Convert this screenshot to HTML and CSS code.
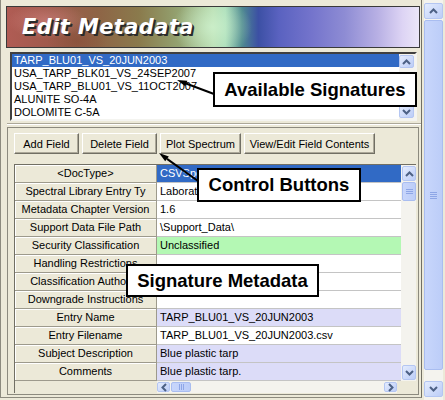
FILE: index.html
```html
<!DOCTYPE html>
<html>
<head>
<meta charset="utf-8">
<title>Edit Metadata</title>
<link rel="stylesheet" href="styles.css">
</head>
<body>
<div class="frame">
  <div class="content">
    <div class="banner"><span class="title">Edit Metadata</span></div>
    <div class="listbox">
      <ul class="items">
        <li class="sel">TARP_BLU01_VS_20JUN2003</li>
        <li>USA_TARP_BLK01_VS_24SEP2007</li>
        <li>USA_TARP_BLU01_VS_11OCT2007</li>
        <li>ALUNITE SO-4A</li>
        <li>DOLOMITE C-5A</li>
      </ul>
      <div class="lscroll">
        <span class="sbtn"><svg width="9" height="6" viewBox="0 0 9 6"><path d="M1 5 L4.5 1.5 L8 5" fill="none" stroke="#4d6185" stroke-width="2"/></svg></span>
        <span class="strack"></span>
        <span class="sbtn"><svg width="9" height="6" viewBox="0 0 9 6"><path d="M1 1 L4.5 4.5 L8 1" fill="none" stroke="#4d6185" stroke-width="2"/></svg></span>
      </div>
    </div>
    <div class="sep"></div>
    <div class="panel">
      <div class="buttons">
        <button class="btn w-add">Add Field</button>
        <button class="btn w-del">Delete Field</button>
        <button class="btn w-plot">Plot Spectrum</button>
        <button class="btn w-view">View/Edit Field Contents</button>
      </div>
      <div class="grid">
        <div class="lab">&lt;DocType&gt;</div><div class="val v-sel">CSVSpe</div>
        <div class="vscroll">
          <span class="sbtn gbtn"><svg width="9" height="6" viewBox="0 0 9 6"><path d="M1 5 L4.5 1.5 L8 5" fill="none" stroke="#4d6185" stroke-width="2"/></svg></span>
          <span class="gthumb"><i></i><i></i><i></i></span>
          <span class="strack"></span>
          <span class="sbtn gbtn"><svg width="9" height="6" viewBox="0 0 9 6"><path d="M1 1 L4.5 4.5 L8 1" fill="none" stroke="#4d6185" stroke-width="2"/></svg></span>
        </div>
        <div class="lab">Spectral Library Entry Ty</div><div class="val">Laborat</div>
        <div class="lab">Metadata Chapter Version</div><div class="val">1.6</div>
        <div class="lab">Support Data File Path</div><div class="val">\Support_Data\</div>
        <div class="lab">Security Classification</div><div class="val v-green">Unclassified</div>
        <div class="lab">Handling Restrictions</div><div class="val"></div>
        <div class="lab">Classification Authority</div><div class="val"></div>
        <div class="lab">Downgrade Instructions</div><div class="val"></div>
        <div class="lab">Entry Name</div><div class="val v-lav">TARP_BLU01_VS_20JUN2003</div>
        <div class="lab">Entry Filename</div><div class="val">TARP_BLU01_VS_20JUN2003.csv</div>
        <div class="lab">Subject Description</div><div class="val v-lav">Blue plastic tarp</div>
        <div class="lab">Comments</div><div class="val v-lav">Blue plastic tarp.</div>
        <div class="corner"></div>
        <div class="hscroll">
          <span class="hbtn"><svg width="6" height="9" viewBox="0 0 6 9"><path d="M5 1 L1.5 4.5 L5 8" fill="none" stroke="#4d6185" stroke-width="2"/></svg></span>
          <span class="hthumb"><i></i><i></i><i></i></span>
          <span class="htrack"></span>
          <span class="hbtn"><svg width="6" height="9" viewBox="0 0 6 9"><path d="M1 1 L4.5 4.5 L1 8" fill="none" stroke="#4d6185" stroke-width="2"/></svg></span>
        </div>
      </div>
    </div>
  </div>
  <div class="oscroll">
    <span class="obtn"><svg width="9" height="6" viewBox="0 0 9 6"><path d="M1 5 L4.5 1.5 L8 5" fill="none" stroke="#4d6185" stroke-width="2"/></svg></span>
    <span class="othumb"><i></i><i></i><i></i><i></i></span>
    <span class="otrack"></span>
    <span class="obtn"><svg width="9" height="6" viewBox="0 0 9 6"><path d="M1 1 L4.5 4.5 L8 1" fill="none" stroke="#4d6185" stroke-width="2"/></svg></span>
  </div>

  <svg class="arrows" width="445" height="400" viewBox="0 0 445 400">
    <line x1="214" y1="94" x2="186" y2="83.5" stroke="#000" stroke-width="2"/>
    <polygon points="177,80 187.4,80.7 185.3,86.3" fill="#000"/>
    <line x1="198" y1="181" x2="167" y2="158.9" stroke="#000" stroke-width="2"/>
    <polygon points="159,153 168.8,156.5 165.2,161.3" fill="#000"/>
  </svg>
  <div class="callout c-avail">Available Signatures</div>
  <div class="callout c-ctrl">Control Buttons</div>
  <div class="callout c-meta">Signature Metadata</div>
</div>
</body>
</html>
```
FILE: styles.css
```css
* { box-sizing: border-box; }
html, body { margin: 0; padding: 0; }
body {
  background: #ece9d8;
  font-family: "Liberation Sans", Arial, sans-serif;
  font-size: 11px;
  color: #000;
}
.frame {
  position: relative;
  width: 445px;
  height: 400px;
  display: flex;
  overflow: hidden;
}
.content {
  width: 422px;
  height: 398px;
  padding: 6px 0 0 5px;
  border-left: 1px solid #8c8a7e;
  border-right: 1px solid #716f64;
  border-bottom: 1px solid #8c8a7e;
}
.banner {
  width: 414px;
  height: 42px;
  border: 1px solid #3a3a3a;
  background:
    radial-gradient(ellipse 40px 18px at 40px 14px, rgba(230,150,150,0.45), transparent),
    radial-gradient(ellipse 30px 20px at 70px 34px, rgba(120,60,40,0.35), transparent),
    radial-gradient(ellipse 40px 30px at 205px 20px, rgba(210,245,210,0.7), transparent),
    linear-gradient(90deg, #b05c54 0%, #a05a4c 10%, #8e6446 22%, #8a7a4c 32%, #94a472 42%, #b8dcb0 50%, #a8dcb8 53%, #4e8a90 57%, #3c50a4 61%, #5a62c0 66%, #7474cc 74%, #8e8cd4 82%, #b8b0e4 90%, #ddd4f4 96%, #ebe6f8 100%);
  padding-left: 15px;
  line-height: 40px;
  overflow: hidden;
}
.title {
  font-family: "DejaVu Sans", sans-serif;
  font-weight: bold;
  font-style: italic;
  font-size: 21px;
  letter-spacing: 0.4px;
  color: #fff;
  text-shadow: 2px 2px 0 #2a2a2a, 1px 1px 0 #555;
}
.listbox {
  margin: 4px 0 0 4px;
  width: 407px;
  height: 69px;
  display: flex;
  border: 2px solid;
  border-color: #404040 #f4f4f0 #f4f4f0 #404040;
  background: #fff;
}
.items {
  list-style: none;
  margin: 0;
  padding: 0;
  flex: 1;
  font-size: 11px;
}
.items li {
  height: 13px;
  line-height: 13px;
  padding-left: 2px;
  white-space: nowrap;
}
.items li.sel { background: #316ac5; color: #fff; }
.lscroll {
  width: 16px;
  display: flex;
  flex-direction: column;
  background: #f4f3ee;
  padding: 1px 1px 1px 0;
}
.sbtn {
  height: 13px;
  display: flex;
  align-items: center;
  justify-content: center;
  background: linear-gradient(135deg, #e4ecfe, #bccdf7);
  border: 1px solid #b4c6f2;
  border-radius: 2px;
}
.strack { flex: 1; }
.sep {
  margin: 2px 0 2px 1px;
  width: 414px;
  height: 2px;
  border-top: 1px solid #aca899;
  border-bottom: 1px solid #fff;
}
.panel {
  margin-left: 1px;
  width: 412px;
  height: 268px;
  border: 1px solid #8c8a7e;
  padding: 5px 0 0 6px;
}
.buttons { display: flex; gap: 3px; }
.btn {
  height: 21px;
  padding: 0;
  font-family: "Liberation Sans", Arial, sans-serif;
  font-size: 11px;
  color: #000;
  background: #ece9d8;
  border: 1px solid;
  border-color: #fff #716f64 #716f64 #fff;
  box-shadow: inset -1px -1px 0 #aca899;
}
.w-add { width: 65px; }
.w-del { width: 75px; }
.w-plot { width: 81px; }
.w-view { width: 131px; }
.grid {
  margin-top: 10px;
  display: grid;
  grid-template-columns: 142px 244px 15px;
  grid-template-rows: repeat(12, 18px) 12px;
  border-left: 1px solid #716f64;
  border-top: 1px solid #716f64;
  width: 402px;
}
.lab {
  background: #ece9d8;
  border-right: 1px solid #9d9a8c;
  border-bottom: 1px solid #9d9a8c;
  box-shadow: inset 1px 1px 0 #fff;
  text-align: center;
  line-height: 17px;
  white-space: nowrap;
  overflow: hidden;
}
.val {
  background: #fff;
  border-bottom: 1px solid #c4c4c4;
  line-height: 17px;
  padding-left: 3px;
  white-space: nowrap;
  overflow: hidden;
}
.v-sel { background: #316ac5; color: #fff; }
.v-green { background: #b4f8b4; }
.v-lav { background: #dcdcf8; }
.vscroll {
  grid-column: 3;
  grid-row: 1 / 13;
  display: flex;
  flex-direction: column;
  background: #f4f3ee;
  padding: 1px 0 1px 1px;
}
.gbtn { height: 15px; }
.gthumb, .hthumb, .othumb {
  display: flex;
  align-items: center;
  justify-content: center;
  gap: 1px;
  background: linear-gradient(90deg, #c8d6fb, #bccdf8);
  border: 1px solid #a9bdf0;
  border-radius: 2px;
}
.gthumb { height: 19px; flex-direction: column; margin-top: 1px; }
.gthumb i, .othumb i { display: block; width: 7px; height: 1px; background: #8ea6e6; }
.hthumb i { display: block; width: 1px; height: 6px; background: #8ea6e6; }
.corner { background: #ece9d8; }
.hscroll {
  width: 240px;
  display: flex;
  background: #f4f3ee;
  padding: 1px 0;
}
.hbtn {
  width: 13px;
  display: flex;
  align-items: center;
  justify-content: center;
  background: linear-gradient(135deg, #e4ecfe, #bccdf7);
  border: 1px solid #b4c6f2;
  border-radius: 2px;
}
.hthumb { width: 20px; margin-left: 1px; }
.htrack { flex: 1; }
.oscroll {
  margin-left: 2px;
  width: 19px;
  height: 400px;
  display: flex;
  flex-direction: column;
  padding: 3px 0 3px 0;
  background: #f4f3ee;
}
.obtn {
  height: 16px;
  display: flex;
  align-items: center;
  justify-content: center;
  background: linear-gradient(135deg, #e4ecfe, #bccdf7);
  border: 1px solid #b4c6f2;
  border-radius: 2px;
}
.othumb { height: 350px; margin-top: 1px; flex-direction: column; }
.otrack { flex: 1; }
.arrows {
  position: absolute;
  left: 0;
  top: 0;
  pointer-events: none;
}
.callout {
  position: absolute;
  background: #fff;
  border: 2px solid #000;
  font-family: "Liberation Sans", Arial, sans-serif;
  font-weight: bold;
  font-size: 18.5px;
  display: flex;
  align-items: center;
  justify-content: center;
}
.c-avail { left: 213px; top: 72px; width: 204px; height: 35px; }
.c-ctrl { left: 197px; top: 168px; width: 164px; height: 34px; }
.c-meta { left: 126px; top: 264px; width: 193px; height: 33px; }
```
